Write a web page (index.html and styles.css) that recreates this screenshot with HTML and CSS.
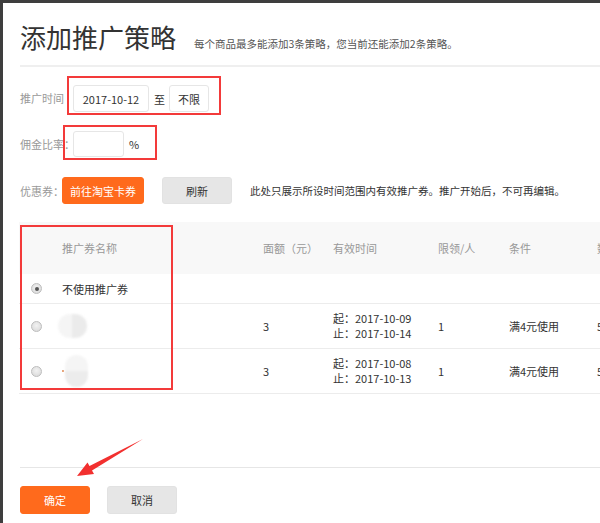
FILE: index.html
```html
<!DOCTYPE html>
<html lang="zh-CN">
<head>
<meta charset="utf-8">
<title>添加推广策略</title>
<link rel="stylesheet" href="styles.css">
</head>
<body>
<div class="page">
  <header class="head">
    <h1 class="title">添加推广策略</h1>
    <span class="sub">每个商品最多能添加3条策略，您当前还能添加2条策略。</span>
  </header>

  <div class="row row-time">
    <span class="label label-time">推广时间</span>
    <div class="mark mark-time">
      <span class="box box-date">2017-10-12</span>
      <span class="to">至</span>
      <span class="box box-unl">不限</span>
    </div>
  </div>

  <div class="row row-rate">
    <span class="label label-rate">佣金比率：</span>
    <div class="mark mark-rate">
      <span class="box box-rate"></span>
      <span class="pct">%</span>
    </div>
  </div>

  <div class="row row-coupon">
    <span class="label label-coupon">优惠券：</span>
    <button class="btn btn-primary btn-go">前往淘宝卡券</button>
    <button class="btn btn-gray btn-refresh">刷新</button>
    <span class="note">此处只展示所设时间范围内有效推广券。推广开始后，不可再编辑。</span>
  </div>

  <div class="table">
    <div class="tr th">
      <span></span>
      <span>推广券名称</span>
      <span>面额（元）</span>
      <span>有效时间</span>
      <span>限领/人</span>
      <span>条件</span>
      <span>数量</span>
    </div>
    <div class="tr td row-none">
      <span><i class="radio checked"></i></span>
      <span>不使用推广券</span>
      <span></span><span></span><span></span><span></span><span></span>
    </div>
    <div class="tr td row-item">
      <span><i class="radio"></i></span>
      <span><i class="blur blur-a"></i></span>
      <span>3</span>
      <span class="dates"><span>起：2017-10-09</span><span>止：2017-10-14</span></span>
      <span>1</span>
      <span>满4元使用</span>
      <span>5</span>
    </div>
    <div class="tr td row-item">
      <span><i class="radio"></i></span>
      <span class="name-b"><i class="tick"></i><i class="blur blur-b"></i></span>
      <span>3</span>
      <span class="dates"><span>起：2017-10-08</span><span>止：2017-10-13</span></span>
      <span>1</span>
      <span>满4元使用</span>
      <span>5</span>
    </div>
    <div class="mark-table"></div>
  </div>

  <footer class="foot">
    <button class="btn btn-primary btn-ok">确定</button>
    <button class="btn btn-gray btn-cancel">取消</button>
  </footer>
</div>

<svg class="arrow" width="600" height="523" viewBox="0 0 600 523">
  <polygon points="143,439 92,470.5 94,474 77,476 87.5,462.5 89.5,466" fill="#f2302f"/>
</svg>
</body>
</html>
```

FILE: styles.css
```css
* { box-sizing: border-box; }

html, body {
  margin: 0;
  padding: 0;
}

body {
  width: 600px;
  height: 523px;
  overflow: hidden;
  background: #fff;
  border-top: 3px solid #3e3e3e;
  border-left: 3px solid #3e3e3e;
  font-family: "Noto Sans CJK SC", "Noto Sans", sans-serif;
  font-size: 11px;
  color: #333;
}

.page {
  padding-left: 17px;
  width: 760px;
}

.head {
  display: flex;
  align-items: baseline;
  padding-top: 21px;
  padding-bottom: 14px;
  border-bottom: 2px solid #efefef;
}

.title {
  margin: 0;
  font-size: 26px;
  line-height: 26px;
  font-weight: normal;
  color: #333;
}

.sub {
  margin-left: 18px;
  font-size: 10.5px;
  color: #555;
}

.row {
  display: flex;
  align-items: flex-start;
}

.label {
  color: #999;
  white-space: nowrap;
  font-size: 11px;
}

.row-time { margin-top: 9px; }
.label-time { width: 47px; margin-top: 9px; line-height: 27px; }

.mark {
  display: flex;
  align-items: center;
  border: 2px solid #f33a3a;
}

.mark-time {
  padding: 7px 10px 1px 4px;
}

.box {
  display: flex;
  align-items: center;
  justify-content: center;
  height: 27px;
  border: 1px solid #e6e6e6;
  border-radius: 3px;
  color: #333;
}

.box-date { width: 76px; }
.to { margin: 0 5px; width: 10px; }
.box-unl { width: 40px; }

.row-rate { margin-top: 10px; }
.label-rate { width: 43px; margin-top: 6px; line-height: 26px; }

.mark-rate {
  width: 94px;
  padding: 4px 0 1px 8px;
}

.box-rate { width: 51px; height: 26px; }
.pct { margin-left: 5px; }

.row-coupon {
  margin-top: 17px;
  align-items: center;
}

.label-coupon { width: 42px; }

.btn {
  font-family: inherit;
  font-size: 11px;
  height: 27px;
  border-radius: 3px;
  padding: 0;
  cursor: pointer;
}

.btn-primary {
  background: #ff6a1c;
  border: 1px solid #ff6a1c;
  color: #fff;
}

.btn-gray {
  background: #e6e6e6;
  border: 1px solid #e2e2e2;
  color: #333;
}

.btn-go { width: 82px; }
.btn-refresh { width: 70px; margin-left: 18px; }

.note {
  margin-left: 18px;
  font-size: 10.5px;
  color: #333;
  white-space: nowrap;
}

.table {
  position: relative;
  margin-top: 18px;
  margin-left: -1px;
}

.tr {
  display: grid;
  grid-template-columns: 43px 201px 70px 105px 71px 88px 80px;
  align-items: center;
}

.th {
  height: 52px;
  background: #f8f8f8;
  color: #999;
}

.td {
  border-bottom: 1px solid #ececec;
}

.row-none { height: 30px; }
.row-item { height: 45px; }

.radio {
  display: block;
  width: 11px;
  height: 11px;
  margin-left: 12px;
  border-radius: 50%;
  border: 1px solid #bdbdbd;
  background: radial-gradient(circle at 50% 40%, #f2f2f2, #d6d6d6);
  position: relative;
}

.radio.checked::after {
  content: "";
  position: absolute;
  left: 2.5px;
  top: 2.5px;
  width: 4px;
  height: 4px;
  border-radius: 50%;
  background: #555;
}

.dates {
  display: flex;
  flex-direction: column;
  line-height: 15px;
}

.blur {
  display: block;
  filter: blur(1px);
}

.blur-a {
  width: 29px;
  height: 24px;
  margin-left: -4px;
  border-radius: 12px;
  background: linear-gradient(90deg, #f5f5f5 50%, #ebebeb 50%);
}

.name-b {
  display: flex;
  align-items: center;
}

.tick {
  display: block;
  width: 2px;
  height: 2px;
  background: #e7a57b;
  margin-right: 1px;
}

.blur-b {
  width: 23px;
  height: 32px;
  border-radius: 12px;
  background: linear-gradient(180deg, #f5f5f5 50%, #ececec 50%);
}

.mark-table {
  position: absolute;
  left: 1px;
  top: 3px;
  width: 153px;
  height: 165px;
  border: 2px solid #f33a3a;
  pointer-events: none;
}

.foot {
  display: flex;
  margin-top: 73px;
  padding-top: 18px;
  border-top: 1px solid #e6e6e6;
}

.btn-ok { width: 70px; height: 28px; }
.btn-cancel { width: 70px; height: 28px; margin-left: 17px; }

.arrow {
  position: absolute;
  left: 0;
  top: 0;
  pointer-events: none;
}
```
